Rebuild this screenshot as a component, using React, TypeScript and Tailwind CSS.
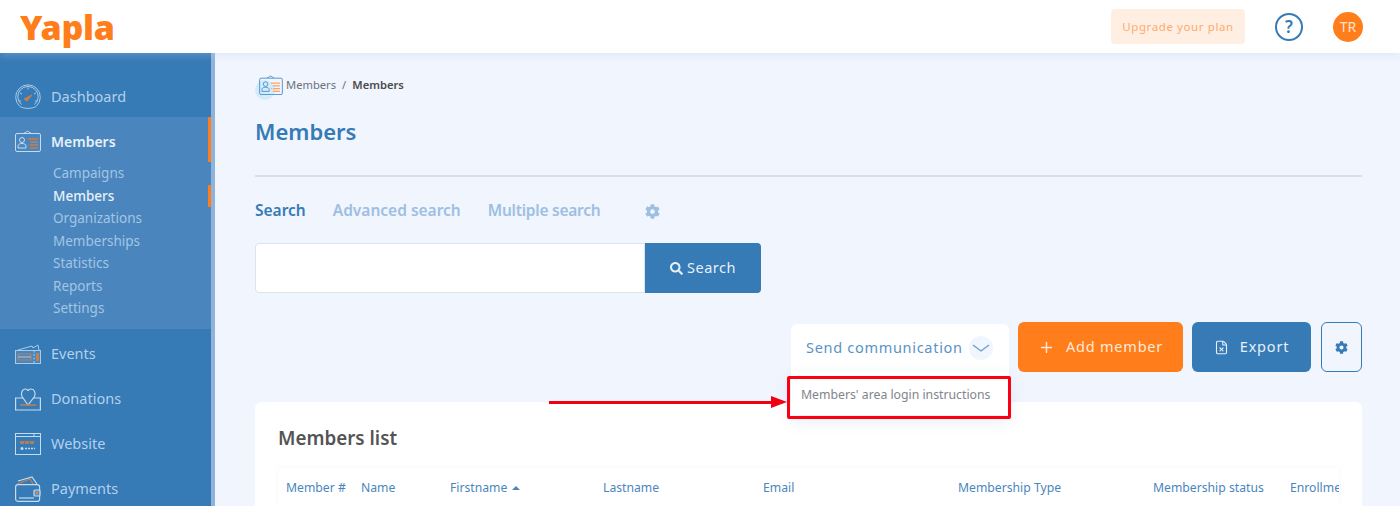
import { FileX, Plus } from 'lucide-react'
import { FaCog, FaSearch } from 'react-icons/fa'

const subItems = ['Campaigns', 'Members', 'Organizations', 'Memberships', 'Statistics', 'Reports', 'Settings']

const columns = [
  { label: 'Member #', width: 'w-[75px]' },
  { label: 'Name', width: 'w-[89px]' },
  { label: 'Firstname', width: 'w-[153px]', sorted: true },
  { label: 'Lastname', width: 'w-[160px]' },
  { label: 'Email', width: 'w-[195px]' },
  { label: 'Membership Type', width: 'w-[195px]' },
  { label: 'Membership status', width: 'w-[137px]' },
  { label: 'Enrollment date', width: 'w-[120px]' },
]

function GaugeIcon() {
  return (
    <svg width="26" height="26" viewBox="0 0 26 26" fill="none" stroke="#a9cbe9" strokeWidth="1">
      <path d="M5 22.500a12.300 12.300 0 1 1 16 0" />
      <path d="M6.500 20.500a10.200 10.200 0 1 1 13 0" />
      <path d="M5 22.500c4 2.500 12 2.500 16 0M4 17h2M20 17h2M5 9l2 1M21 9l-2 1M13 3.500v2" />
      <path d="M9 15l8-4-5 6z" fill="#c57f4c" stroke="#c57f4c" />
    </svg>
  )
}

function BadgeIcon({ stroke = '#c4dcf0', accent = '#c57f4c', width = 26, height = 22 }: { stroke?: string; accent?: string; width?: number; height?: number }) {
  return (
    <svg width={width} height={height} viewBox="0 0 26 22" fill="none" stroke={stroke} strokeWidth="1">
      <rect x="0.500" y="3.500" width="25" height="18" rx="1.500" />
      <path d="M9 3.500c0-1 1-1 2-1.200 .5-1.500 2.500-1.500 3 0 1 .2 2 .2 2 1.200" />
      <circle cx="7" cy="10" r="2.500" />
      <path d="M3 18v-2c0-1.500 1.500-2.500 4-2.500s4 1 4 2.500v2z" />
      <path d="M13 9h10M15 12h8M13 15h1M15 15h8M15 18h8" stroke={accent} strokeWidth="1.500" />
    </svg>
  )
}

function TicketIcon() {
  return (
    <svg width="26" height="20" viewBox="0 0 26 20" fill="none" stroke="#a9cbe9" strokeWidth="1">
      <path d="M3 6l14-4 1 2 5-3 1 5" />
      <rect x="0.500" y="6.500" width="25" height="13" fill="#5a93c6" fillOpacity="0.500" />
      <path d="M19 6.500v13" strokeDasharray="2 1.500" />
      <rect x="3" y="10" width="13" height="6" stroke="#c57f4c" />
      <path d="M3 13h13" />
      <rect x="21" y="9" width="3" height="8" fill="#c57f4c" stroke="none" />
    </svg>
  )
}

function HeartBoxIcon() {
  return (
    <svg width="26" height="24" viewBox="0 0 26 24" fill="none" stroke="#c4dcf0" strokeWidth="1.200">
      <path d="M13 18L7 9.500C5.500 7 7 2 10.500 2 12 2 13 3.500 13 4c0-.5 1.500-2 3-2 3.500 0 5 4.500 3.500 7.500z" />
      <path d="M8 11H.6v12h24.800V11H18" />
      <path d="M5 18h16" stroke="#c57f4c" strokeWidth="1.500" />
    </svg>
  )
}

function BrowserIcon() {
  return (
    <svg width="26" height="22" viewBox="0 0 26 22" fill="none" stroke="#c4dcf0" strokeWidth="1">
      <rect x="0.500" y="0.500" width="25" height="21" />
      <path d="M0.500 3.500h25M19 1v2" />
      <path d="M5 8l1 3 1-3 1 3 1-3M10 8l1 3 1-3 1 3 1-3M15 8l1 3 1-3 1 3 1-3" stroke="#c57f4c" />
      <circle cx="7" cy="15.500" r="1.500" fill="#c4dcf0" stroke="none" />
      <path d="M10 15.500h10" strokeWidth="1.500" strokeDasharray="2 1" />
    </svg>
  )
}

function WalletIcon() {
  return (
    <svg width="26" height="26" viewBox="0 0 26 26" fill="none" stroke="#c4dcf0" strokeWidth="1.200">
      <path d="M2 8l13-5 3 5" stroke="#c57f4c" />
      <path d="M3 5l14-4 5 7" />
      <rect x="0.600" y="8.600" width="24" height="16.800" rx="2.500" />
      <rect x="19" y="14" width="6" height="6" rx="1" fill="#5a93c6" />
      <circle cx="22" cy="17" r="1.200" fill="#ff7d1a" stroke="none" />
      <path d="M4 22h15" />
    </svg>
  )
}

function NavRow({ icon, label, active }: { icon: React.ReactNode; label: string; active?: boolean }) {
  return (
    <div className={`flex h-[45px] items-center ${active ? 'border-r-[3px] border-[#ff7d1a] pt-[3px] text-[14px] font-semibold text-[#e6f0f9]' : 'text-[14.500px] text-[#b3d1ec]'}`}>
      <div className="flex w-[51px] shrink-0 justify-center pl-[6px] pr-[2px]">{icon}</div>
      <span>{label}</span>
    </div>
  )
}

export default function App() {
  return (
    <div className="relative flex h-[506px] w-[1400px] flex-col overflow-hidden bg-[#f0f5fe] font-['Noto_Sans',sans-serif]">
      <header className="relative z-10 flex h-[53px] shrink-0 items-center justify-between bg-white pl-[20px] pr-[37px] shadow-[0_2px_8px_rgba(190,205,240,0.35)]">
        <span className="font-['Noto_Sans',sans-serif] text-[34px] font-black leading-none tracking-[-0.300px] text-[#ff7d1a]">Yapla</span>
        <div className="flex items-center">
          <button className="flex h-[35px] w-[134px] items-center justify-center rounded bg-[#ffefe3] text-[11.500px] tracking-[0.600px] text-[#ffaa70]">
            Upgrade your plan
          </button>
          <div className="ml-[30px] flex h-[28px] w-[28px] items-center justify-center rounded-full border-2 border-[#367ab6] text-[17px] font-semibold text-[#367ab6]">
            ?
          </div>
          <div className="ml-[30px] flex h-[30px] w-[30px] items-center justify-center rounded-full bg-[#ff7d1a] text-[14px] text-[#ffe2cc]">
            TR
          </div>
        </div>
      </header>

      <div className="flex min-h-0 flex-1">
        <aside className="w-[215px] shrink-0 overflow-hidden border-r-4 border-[#8fb4dc] bg-[#367ab6] pt-[21px]">
          <NavRow icon={<GaugeIcon />} label="Dashboard" />
          <div className="mt-[-2px] h-[212px] bg-[#4a86bd]">
            <NavRow icon={<BadgeIcon />} label="Members" active />
            {subItems.map(item => (
              <div
                key={item}
                className={`flex h-[22.500px] items-center pl-[53px] text-[13.500px] ${item === 'Members' ? 'border-r-[3px] border-[#ff7d1a] font-medium text-[#e6f0f9]' : 'text-[#a3c5e4]'}`}
              >
                {item}
              </div>
            ))}
          </div>
          <div className="h-[2px]" />
          <NavRow icon={<TicketIcon />} label="Events" />
          <NavRow icon={<HeartBoxIcon />} label="Donations" />
          <NavRow icon={<BrowserIcon />} label="Website" />
          <NavRow icon={<WalletIcon />} label="Payments" />
        </aside>

        <main className="min-w-0 flex-1 pl-[40px] pr-[38px] pt-[16px]">
          <div className="flex h-[32px] items-center text-[11.200px] text-[#6b7280]">
            <div className="relative ml-[4px] mr-[3px]">
              <div className="absolute left-[-4px] top-[5px] h-[20px] w-[20px] rounded-full bg-[#d3ecfb]" />
              <div className="relative">
                <BadgeIcon stroke="#4a8fcc" accent="#ffa468" width={24} height={20} />
              </div>
            </div>
            <span>Members</span>
            <span className="mx-[6px]">/</span>
            <span className="font-semibold text-[#4b4b4b]">Members</span>
          </div>

          <h1 className="mt-[14px] text-[22px] font-semibold leading-[32px] text-[#367ab6]">Members</h1>

          <div className="mt-[28px] h-[2px] bg-[#d8dfeb]" />

          <div className="mt-[22px] flex h-[24px] items-center text-[15.500px] font-semibold text-[#9dbfe2]">
            <span className="text-[#367ab6]">Search</span>
            <span className="ml-[27px]">Advanced search</span>
            <span className="ml-[27px] tracking-[-0.250px]">Multiple search</span>
            <FaCog className="ml-[45px] h-[15px] w-[15px]" />
          </div>

          <div className="mt-[20px] flex h-[50px]">
            <input className="h-full w-[390px] rounded-l border border-[#dde3ec] bg-white" />
            <button className="flex w-[116px] items-center justify-center gap-1 rounded-r bg-[#367ab6] text-[14.500px] tracking-[0.500px] text-[#e6f0f9]">
              <FaSearch className="h-[13px] w-[13px]" />
              Search
            </button>
          </div>

          <div className="relative mt-[29px] flex justify-end">
            <div className="relative mr-[9px] mt-[2px] h-[48px] w-[218px] rounded-t-md bg-white">
              <div className="flex h-full items-center pl-[15px] text-[14.500px] tracking-[0.700px] text-[#5a93c6]">
                Send communication
                <span className="ml-[6px] flex h-[24px] w-[24px] items-center justify-center rounded-full bg-[#f0f5fe]">
                  <svg width="18" height="10" viewBox="0 0 18 10" fill="none" stroke="#6a9dcb" strokeWidth="1.300">
                    <path d="M1 2l8 6 8-6" />
                  </svg>
                </span>
              </div>
            </div>
            <button className="flex h-[50px] w-[165px] items-center justify-center gap-[11px] rounded-md bg-[#ff7d1a] text-[14.500px] tracking-[0.800px] text-[#ffe9d9]">
              <Plus className="h-[17px] w-[17px]" strokeWidth={2} />
              Add member
            </button>
            <button className="ml-[9px] flex h-[50px] w-[119px] items-center justify-center gap-[11px] rounded-md bg-[#367ab6] text-[14.500px] tracking-[0.800px] text-[#e6f0f9]">
              <FileX className="h-[15px] w-[15px]" strokeWidth={1.800} />
              Export
            </button>
            <button className="ml-[10px] flex h-[50px] w-[41px] items-center justify-center rounded-md border border-[#367ab6]">
              <FaCog className="h-[13px] w-[13px] text-[#367ab6]" />
            </button>
          </div>

          <section className="mt-[30px] h-[200px] overflow-hidden rounded-md bg-white px-[23px] pt-[22px]">
            <h2 className="text-[18.800px] font-semibold leading-[28px] text-[#545454]">Members list</h2>
            <div className="mt-[16px] flex h-[40px] items-center overflow-hidden whitespace-nowrap pl-[8px] text-[12.200px] text-[#4a86bd] shadow-[0_0_6px_rgba(200,215,240,0.2)]">
              {columns.map(col => (
                <div key={col.label} className={`${col.width} flex shrink-0 items-center`}>
                  {col.label}
                  {col.sorted && <span className="ml-[5px] h-0 w-0 border-x-[4px] border-b-[4px] border-x-transparent border-b-[#4a86bd]" />}
                </div>
              ))}
            </div>
          </section>
        </main>
      </div>

      {/* dropdown and the red annotation sit over the page */}
      <div className="absolute left-[791px] top-[372px] h-[43px] w-[218px] bg-white shadow-[0_6px_16px_rgba(120,150,200,0.18)]" />
      <div className="absolute left-[787px] top-[376px] flex h-[43px] w-[224px] items-center rounded-[2px] border-[3px] border-[#fa0010] pb-[4px] pl-[11px] text-[12.250px] text-[#7f848c]">
        Members' area login instructions
      </div>
      <div className="absolute left-[549px] top-[401px] h-[2.500px] w-[222px] bg-[#f00010]" />
      <div className="absolute left-[771px] top-[396px] h-0 w-0 border-y-[6.500px] border-l-[16px] border-y-transparent border-l-[#f00010]" />
    </div>
  )
}
